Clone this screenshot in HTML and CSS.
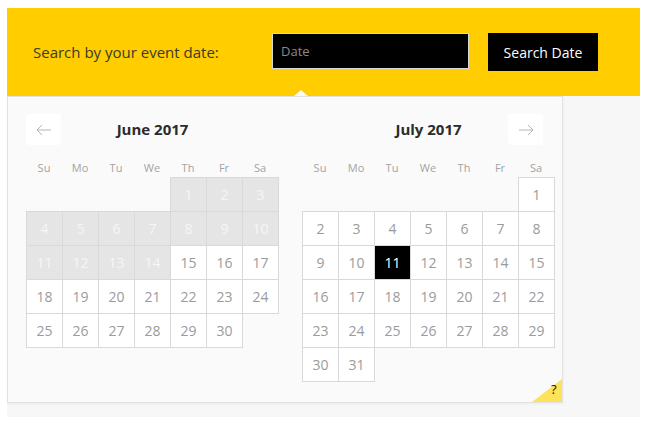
FILE: index.html
```html
<!DOCTYPE html>
<html>
<head>
<meta charset="utf-8">
<link rel="stylesheet" href="styles.css">
</head>
<body>
<div class="widget">
  <div class="search-bar">
    <label class="search-label">Search by your event date:</label>
    <div class="input-wrap">
      <input class="date-input" type="text" placeholder="Date">
      <span class="caret"></span>
    </div>
    <button class="search-btn">Search Date</button>
  </div>
  <div class="below">
    <div class="picker">
      <button class="nav-btn nav-prev"><svg width="16" height="12" viewBox="0 0 16 12"><path d="M15 6H1M6 1L1 6L6 11" fill="none" stroke="#b5b5b5" stroke-width="1"/></svg></button>
      <button class="nav-btn nav-next"><svg width="16" height="12" viewBox="0 0 16 12"><path d="M1 6H15M10 1L15 6L10 11" fill="none" stroke="#b5b5b5" stroke-width="1"/></svg></button>
      <div class="months">
        <div class="month">
          <div class="month-title">June 2017</div>
          <div class="weekdays"><span>Su</span><span>Mo</span><span>Tu</span><span>We</span><span>Th</span><span>Fr</span><span>Sa</span></div>
          <table class="days">
            <tr><td class="empty"></td><td class="empty"></td><td class="empty"></td><td class="empty"></td><td class="blocked">1</td><td class="blocked">2</td><td class="blocked">3</td></tr>
            <tr><td class="blocked">4</td><td class="blocked">5</td><td class="blocked">6</td><td class="blocked">7</td><td class="blocked">8</td><td class="blocked">9</td><td class="blocked">10</td></tr>
            <tr><td class="blocked">11</td><td class="blocked">12</td><td class="blocked">13</td><td class="blocked">14</td><td>15</td><td>16</td><td>17</td></tr>
            <tr><td>18</td><td>19</td><td>20</td><td>21</td><td>22</td><td>23</td><td>24</td></tr>
            <tr><td>25</td><td>26</td><td>27</td><td>28</td><td>29</td><td>30</td><td class="empty"></td></tr>
          </table>
        </div>
        <div class="month">
          <div class="month-title">July 2017</div>
          <div class="weekdays"><span>Su</span><span>Mo</span><span>Tu</span><span>We</span><span>Th</span><span>Fr</span><span>Sa</span></div>
          <table class="days">
            <tr><td class="empty"></td><td class="empty"></td><td class="empty"></td><td class="empty"></td><td class="empty"></td><td class="empty"></td><td>1</td></tr>
            <tr><td>2</td><td>3</td><td>4</td><td>5</td><td>6</td><td>7</td><td>8</td></tr>
            <tr><td>9</td><td>10</td><td class="selected">11</td><td>12</td><td>13</td><td>14</td><td>15</td></tr>
            <tr><td>16</td><td>17</td><td>18</td><td>19</td><td>20</td><td>21</td><td>22</td></tr>
            <tr><td>23</td><td>24</td><td>25</td><td>26</td><td>27</td><td>28</td><td>29</td></tr>
            <tr><td>30</td><td>31</td><td class="empty"></td><td class="empty"></td><td class="empty"></td><td class="empty"></td><td class="empty"></td></tr>
          </table>
        </div>
      </div>
      <div class="help"><span class="help-mark">?</span></div>
    </div>
  </div>
</div>
</body>
</html>
```

FILE: styles.css
```css
* { box-sizing: border-box; }
html, body { margin: 0; padding: 0; background: #fff; }
body {
  font-family: "Open Sans", "Liberation Sans", sans-serif;
  color: #333;
}
.widget {
  margin: 8px 0 0 7px;
  width: 633px;
}
.search-bar {
  height: 88px;
  background: #ffcd00;
  display: flex;
  align-items: center;
  padding-left: 26px;
}
.search-label {
  width: 239px;
  font-size: 15px;
  color: #3a3a2a;
}
.input-wrap {
  position: relative;
  width: 197px;
  height: 36px;
  margin-top: -2px;
}
.date-input {
  width: 197px;
  height: 36px;
  margin: 0;
  background: #000;
  border: 1px solid #d8d8d8;
  color: #fff;
  font-family: inherit;
  font-size: 13px;
  padding: 0 8px;
  outline: none;
}
.date-input::placeholder { color: #8a8a8a; }
.caret {
  position: absolute;
  left: 22px;
  top: 57px;
  width: 0;
  height: 0;
  border-left: 7px solid transparent;
  border-right: 7px solid transparent;
  border-bottom: 6px solid #fafafa;
}
.search-btn {
  margin-left: 19px;
  width: 110px;
  height: 38px;
  background: #000;
  color: #fff;
  border: 0;
  font-family: inherit;
  font-size: 14px;
  padding: 0;
}
.below {
  position: relative;
  height: 321px;
  background: #f7f7f7;
}
.picker {
  position: absolute;
  left: 0;
  top: 0;
  width: 556px;
  height: 307px;
  background: #fafafa;
  border: 1px solid #e2e2e2;
  box-shadow: 0 1px 3px rgba(0,0,0,0.05);
  padding: 17px 0 0 18px;
}
.months {
  display: flex;
  gap: 23px;
}
.month { width: 253px; }
.nav-btn {
  position: absolute;
  top: 17px;
  width: 35px;
  height: 31px;
  background: #fff;
  border: 0;
  border-radius: 3px;
  padding: 0;
  display: flex;
  align-items: center;
  justify-content: center;
}
.nav-prev { left: 18px; }
.nav-next { right: 19px; }
.month-title {
  height: 31px;
  line-height: 31px;
  text-align: center;
  font-weight: bold;
  font-size: 15px;
  color: #2b2b2b;
}
.weekdays {
  display: grid;
  grid-template-columns: repeat(7, 36px);
  margin-top: 14px;
  height: 18px;
  line-height: 18px;
  font-size: 11px;
  color: #a3a3a3;
  text-align: center;
}
.days {
  border-collapse: collapse;
}
.days td {
  width: 36px;
  height: 34px;
  padding: 0;
  text-align: center;
  font-size: 14px;
  color: #9b9b9b;
  background: #fff;
  border: 1px solid #d9d9d9;
}
.days td.empty {
  background: transparent;
  border: 0;
}
.days td.blocked {
  background: #e5e5e5;
  color: #f6f6f6;
}
.days td.selected {
  background: #000;
  color: #fff;
}
.help {
  position: absolute;
  right: 0;
  bottom: 0;
  width: 0;
  height: 0;
  border-top: 23px solid transparent;
  border-right: 30px solid #fde35a;
}
.help-mark {
  position: absolute;
  right: -29px;
  top: -22px;
  width: 10px;
  font-size: 13px;
  color: #111;
}
```
